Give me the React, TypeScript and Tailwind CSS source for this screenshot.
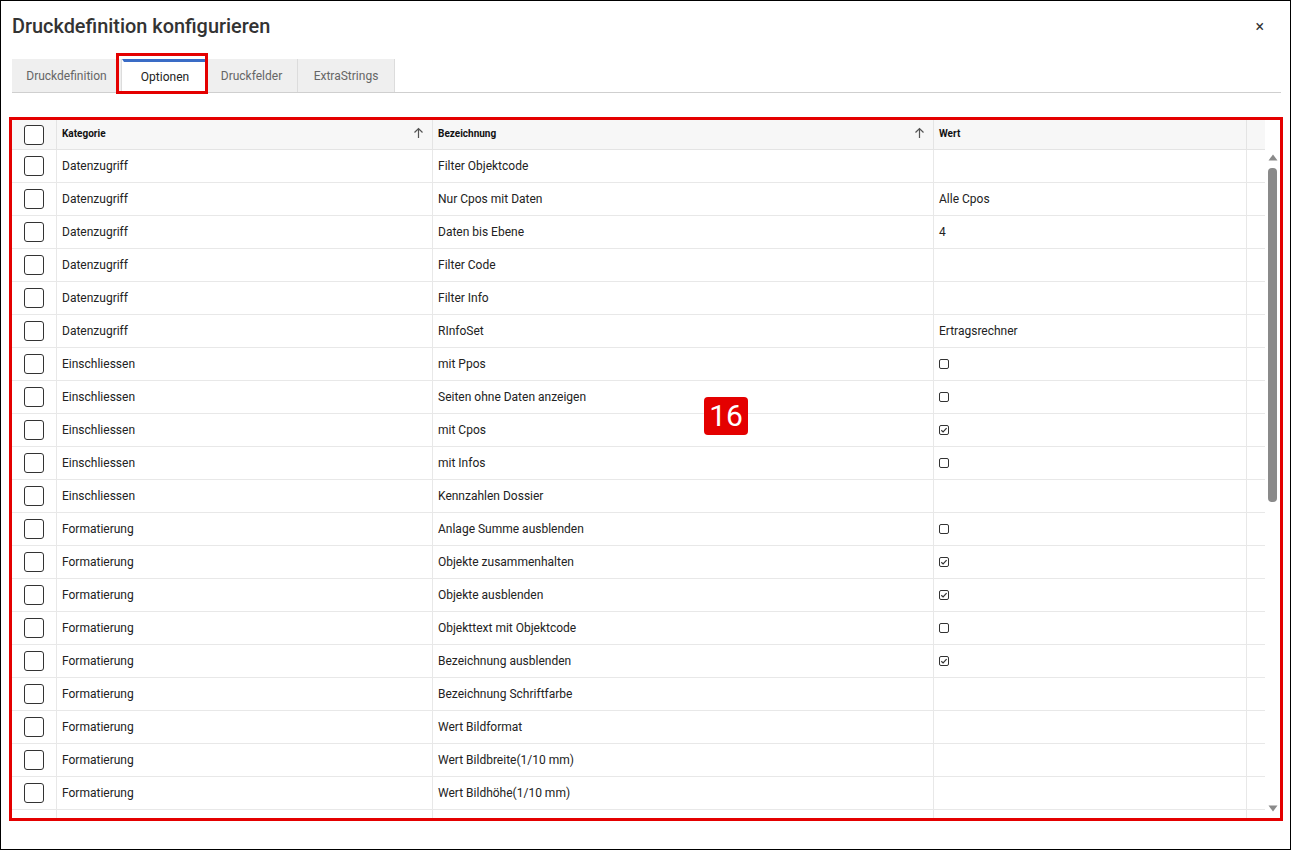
import React from "react";

type Row = { kategorie: string; bezeichnung: string; wert?: string | boolean };

const rows: Row[] = [
  { kategorie: "Datenzugriff", bezeichnung: "Filter Objektcode" },
  { kategorie: "Datenzugriff", bezeichnung: "Nur Cpos mit Daten", wert: "Alle Cpos" },
  { kategorie: "Datenzugriff", bezeichnung: "Daten bis Ebene", wert: "4" },
  { kategorie: "Datenzugriff", bezeichnung: "Filter Code" },
  { kategorie: "Datenzugriff", bezeichnung: "Filter Info" },
  { kategorie: "Datenzugriff", bezeichnung: "RInfoSet", wert: "Ertragsrechner" },
  { kategorie: "Einschliessen", bezeichnung: "mit Ppos", wert: false },
  { kategorie: "Einschliessen", bezeichnung: "Seiten ohne Daten anzeigen", wert: false },
  { kategorie: "Einschliessen", bezeichnung: "mit Cpos", wert: true },
  { kategorie: "Einschliessen", bezeichnung: "mit Infos", wert: false },
  { kategorie: "Einschliessen", bezeichnung: "Kennzahlen Dossier" },
  { kategorie: "Formatierung", bezeichnung: "Anlage Summe ausblenden", wert: false },
  { kategorie: "Formatierung", bezeichnung: "Objekte zusammenhalten", wert: true },
  { kategorie: "Formatierung", bezeichnung: "Objekte ausblenden", wert: true },
  { kategorie: "Formatierung", bezeichnung: "Objekttext mit Objektcode", wert: false },
  { kategorie: "Formatierung", bezeichnung: "Bezeichnung ausblenden", wert: true },
  { kategorie: "Formatierung", bezeichnung: "Bezeichnung Schriftfarbe" },
  { kategorie: "Formatierung", bezeichnung: "Wert Bildformat" },
  { kategorie: "Formatierung", bezeichnung: "Wert Bildbreite(1/10 mm)" },
  { kategorie: "Formatierung", bezeichnung: "Wert Bildhöhe(1/10 mm)" },
];

const tabs = [
  { label: "Druckdefinition", w: "w-[110px]" },
  { label: "Optionen", w: "w-[84px]" },
  { label: "Druckfelder", w: "w-[92px]" },
  { label: "ExtraStrings", w: "w-[97px]" },
];

function SortArrow() {
  return (
    <svg width="11" height="12" viewBox="0 0 11 12" className="text-[#555]">
      <path d="M5.5 11V1.5M1.5 5.5l4-4 4 4" fill="none" stroke="currentColor" strokeWidth="1.2" />
    </svg>
  );
}

function SmallCheck({ checked }: { checked: boolean }) {
  return (
    <div className="w-[10px] h-[10px] border-[1.5px] border-[#333] rounded-[2px] flex items-center justify-center">
      {checked && (
        <svg width="8" height="8" viewBox="0 0 8 8">
          <path d="M1.3 4.2l1.8 1.7 3.5-3.7" fill="none" stroke="#333" strokeWidth="1.2" />
        </svg>
      )}
    </div>
  );
}

function RowCheckbox() {
  return <div className="w-[20px] h-[20px] border border-[#333] rounded-[3px] bg-white" />;
}

export default function App() {
  return (
    <div
      className="w-[1291px] h-[850px] border border-black bg-white relative flex flex-col text-[#222]"
      style={{ fontFamily: "Roboto, 'Liberation Sans', sans-serif" }}
    >
      <div className="flex items-center justify-between h-[52px] pl-[11px] pr-[26px]">
        <h1 className="text-[19.9px] font-medium text-[#333]">Druckdefinition konfigurieren</h1>
        <span className="text-[16px] text-[#333] leading-none">×</span>
      </div>

      <div className="ml-[11px] mr-[9px] mt-[6px] flex border-b border-[#cfcfcf] h-[34px] relative">
        {tabs.map((t) => {
          const active = t.label === "Optionen";
          return (
            <div
              key={t.label}
              className={
                active
                  ? `${t.w} h-[33px] bg-white border-t-[3px] border-l-2 border-l-white border-t-[#3a6cc6] flex items-center justify-center text-[12px] text-[#222]`
                  : `${t.w} h-[33px] bg-[#efefef] border-r border-[#dcdcdc] flex items-center justify-center text-[12px] text-[#666]`
              }
            >
              {t.label}
            </div>
          );
        })}
        <div className="absolute left-[104px] top-[-6px] w-[92px] h-[41px] border-[3px] border-[#e40000]" />
      </div>

      <div className="ml-[8px] mt-[24px] w-[1274px] h-[704px] border-[3px] border-[#e40000] flex overflow-hidden relative">
        <div className="flex-1 flex flex-col overflow-hidden">
          <div className="flex h-[30px] shrink-0 bg-[#f7f7f7] border-b border-[#e4e4e4] text-[10px] font-bold text-[#111]">
            <div className="w-[45px] shrink-0 flex items-center justify-center border-r border-[#e4e4e4]">
              <RowCheckbox />
            </div>
            <div className="w-[376px] shrink-0 flex items-center justify-between pl-[5px] pr-[8px] pb-[3px] border-r border-[#e4e4e4]">
              <span>Kategorie</span>
              <SortArrow />
            </div>
            <div className="w-[501px] shrink-0 flex items-center justify-between pl-[5px] pr-[8px] pb-[3px] border-r border-[#e4e4e4]">
              <span>Bezeichnung</span>
              <SortArrow />
            </div>
            <div className="w-[313px] shrink-0 flex items-center pl-[5px] pb-[3px] border-r border-[#e4e4e4]">
              <span>Wert</span>
            </div>
            <div className="flex-1" />
          </div>
          {rows.map((r, i) => (
            <div key={i} className="flex h-[33px] shrink-0 border-b border-[#e8e8e8] text-[12px] text-[#222]">
              <div className="w-[45px] shrink-0 flex items-center justify-center border-r border-[#e8e8e8]">
                <RowCheckbox />
              </div>
              <div className="w-[376px] shrink-0 flex items-center pl-[5px] border-r border-[#e8e8e8]">
                {r.kategorie}
              </div>
              <div className="w-[501px] shrink-0 flex items-center pl-[5px] border-r border-[#e8e8e8]">
                {r.bezeichnung}
              </div>
              <div className="w-[313px] shrink-0 flex items-center pl-[5px] border-r border-[#e8e8e8]">
                {typeof r.wert === "boolean" ? <SmallCheck checked={r.wert} /> : r.wert}
              </div>
              <div className="flex-1" />
            </div>
          ))}
          <div className="flex flex-1 shrink-0">
            <div className="w-[45px] shrink-0 border-r border-[#e8e8e8]" />
            <div className="w-[376px] shrink-0 border-r border-[#e8e8e8]" />
            <div className="w-[501px] shrink-0 border-r border-[#e8e8e8]" />
            <div className="w-[313px] shrink-0 border-r border-[#e8e8e8]" />
            <div className="flex-1" />
          </div>
        </div>
        <div className="w-[15px] shrink-0 bg-white flex flex-col items-center pt-[34px] pb-[6px]">
          <svg width="10" height="7" viewBox="0 0 10 7">
            <path d="M5 0.5L9.5 6.5H0.5Z" fill="#8a8a8a" />
          </svg>
          <div className="w-[9px] h-[334px] bg-[#8a8a8a] rounded-[4px] mt-[7px]" />
          <div className="flex-1" />
          <svg width="10" height="7" viewBox="0 0 10 7">
            <path d="M0.5 0.5H9.5L5 6.5Z" fill="#8a8a8a" />
          </svg>
        </div>
        <div className="absolute left-[692px] top-[277px] w-[44px] h-[38px] bg-[#e40000] rounded-[4px] flex items-center justify-center text-white text-[30px] leading-none">
          16
        </div>
      </div>
    </div>
  );
}
